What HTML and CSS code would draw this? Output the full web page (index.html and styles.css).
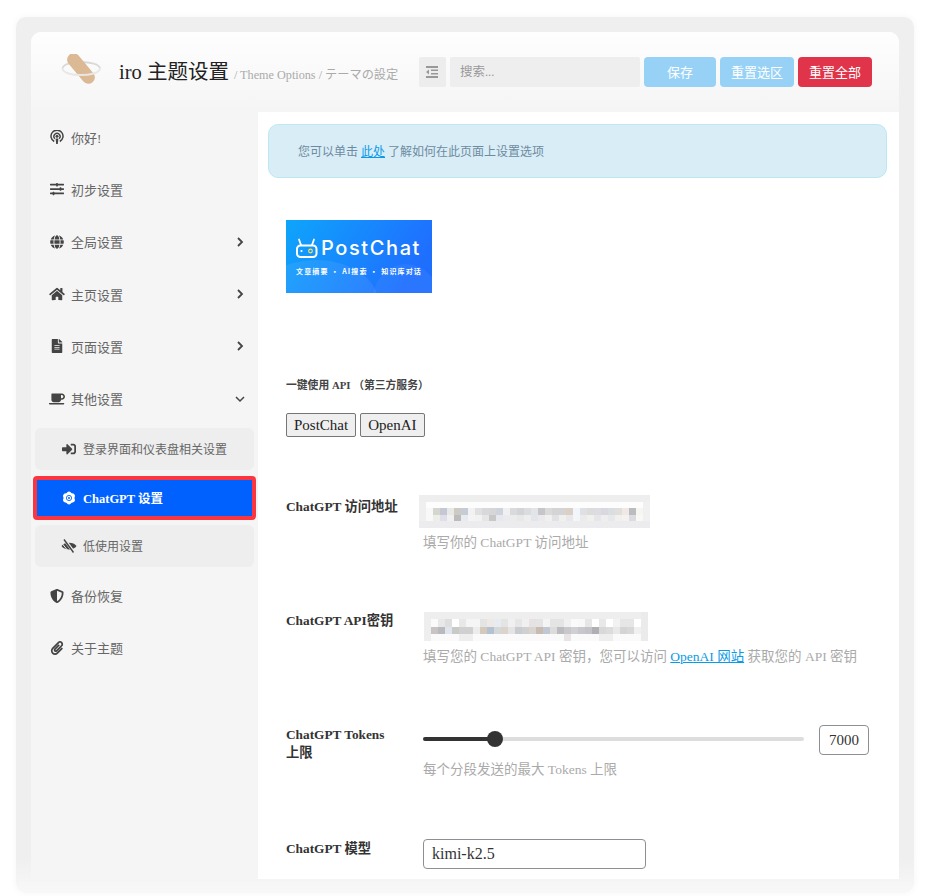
FILE: index.html
```html
<!DOCTYPE html>
<html lang="zh">
<head>
<meta charset="utf-8">
<title>iro 主题设置</title>
<link rel="stylesheet" href="styles.css">
</head>
<body>
<div class="shell">
  <div class="panel">
    <header class="top">
      <svg class="logo" width="58" height="36" viewBox="0 0 58 36">
        <path d="M1.500 14.500C2 10 11 8 20 8s18.500 2 19 6.500" fill="none" stroke="#d9d9d6" stroke-width="1.800"/>
        <rect x="13.500" y="-3.500" width="13" height="36" rx="6.500" fill="#dcb995" transform="rotate(-40 20 14.500)"/>
        <path d="M1.500 14.500C2 19 11 21 20 21s18.500-2 19-6.500" fill="none" stroke="#e8e7e3" stroke-width="2"/>
      </svg>
      <h1 class="title">iro 主题设置</h1>
      <span class="subtitle">/ Theme Options / テーマの設定</span>
      <button class="collapse" aria-label="collapse">
        <svg width="12" height="12" viewBox="0 0 12 12"><path fill="#999" d="M0 0h12v2H0zM5 3.400h7v1.600H5zM5 7h7v1.600H5zM0 10h12v2H0zM3 3.500v5L0 6z"/></svg>
      </button>
      <div class="search">搜索...</div>
      <button class="btn btn-save">保存</button>
      <button class="btn btn-section">重置选区</button>
      <button class="btn btn-all">重置全部</button>
    </header>
    <div class="body">
      <nav class="side">
        <a class="item">
          <svg class="ico" viewBox="0 0 14 14"><g fill="none" stroke="#444"><path stroke-width="1.500" d="M4.200 11.500a6 6 0 1 1 5.600 0"/><path stroke-width="1.300" d="M4.800 8.700a3.100 3.100 0 1 1 4.400 0"/></g><circle cx="7" cy="6.200" r="1.500" fill="#444"/><path fill="#444" d="M5.600 8.400h2.800L7.800 14H6.200z"/></svg>
          <span>你好!</span>
        </a>
        <a class="item">
          <svg class="ico" viewBox="0 0 512 512"><path fill="#444" d="M496 384H160v-16c0-8.800-7.200-16-16-16h-32c-8.800 0-16 7.200-16 16v16H16c-8.800 0-16 7.200-16 16v32c0 8.800 7.200 16 16 16h80v16c0 8.800 7.200 16 16 16h32c8.800 0 16-7.200 16-16v-16h336c8.800 0 16-7.200 16-16v-32c0-8.800-7.200-16-16-16zm0-160h-80v-16c0-8.800-7.200-16-16-16h-32c-8.800 0-16 7.200-16 16v16H16c-8.800 0-16 7.200-16 16v32c0 8.800 7.200 16 16 16h336v16c0 8.800 7.200 16 16 16h32c8.800 0 16-7.200 16-16v-16h80c8.800 0 16-7.200 16-16v-32c0-8.800-7.200-16-16-16zm0-160H288V48c0-8.800-7.200-16-16-16h-32c-8.800 0-16 7.200-16 16v16H16C7.200 64 0 71.200 0 80v32c0 8.800 7.200 16 16 16h208v16c0 8.800 7.200 16 16 16h32c8.800 0 16-7.200 16-16v-16h208c8.800 0 16-7.200 16-16V80c0-8.800-7.200-16-16-16z"/></svg>
          <span>初步设置</span>
        </a>
        <a class="item">
          <svg class="ico" viewBox="0 0 496 512"><path fill="#444" d="M336.500 160C322 70.700 287.800 8 248 8s-74 62.700-88.500 152h177zM152 256c0 22.200 1.200 43.500 3.300 64h185.300c2.100-20.500 3.300-41.800 3.300-64s-1.200-43.500-3.300-64H155.300c-2.100 20.500-3.300 41.800-3.300 64zm324.700-96c-28.600-67.900-86.500-120.400-158-141.600 24.400 33.800 41.200 84.700 50 141.600h108zM177.200 18.400C105.800 39.600 47.800 92.100 19.300 160h108c8.700-56.900 25.500-107.800 49.900-141.600zM487.400 192H372.700c2.100 21 3.300 42.500 3.300 64s-1.200 43-3.300 64h114.600c5.500-20.500 8.600-41.800 8.600-64s-3.100-43.500-8.500-64zM120 256c0-21.500 1.200-43 3.300-64H8.600C3.200 212.500 0 233.800 0 256s3.200 43.500 8.600 64h114.600c-2-21-3.200-42.500-3.200-64zm39.500 96c14.500 89.300 48.700 152 88.500 152s74-62.700 88.500-152h-177zm159.300 141.600c71.400-21.200 129.400-73.700 158-141.600h-108c-8.800 56.900-25.600 107.800-50 141.600zM19.300 352c28.600 67.900 86.500 120.400 158 141.600-24.400-33.800-41.200-84.700-50-141.600h-108z"/></svg>
          <span>全局设置</span>
          <svg class="chev" viewBox="0 0 8 10"><path d="M2 1l4 4-4 4" fill="none" stroke="#444" stroke-width="1.800"/></svg>
        </a>
        <a class="item">
          <svg class="ico wide" viewBox="0 0 576 512"><path fill="#444" d="M280.370 148.260L96 300.110V464a16 16 0 0 0 16 16l112.060-.29a16 16 0 0 0 15.920-16V368a16 16 0 0 1 16-16h64a16 16 0 0 1 16 16v95.640a16 16 0 0 0 16 16.050L464 480a16 16 0 0 0 16-16V300L295.670 148.260a12.190 12.190 0 0 0-15.300 0zM571.600 251.470L488 182.560V44.050a12 12 0 0 0-12-12h-56a12 12 0 0 0-12 12v72.610L318.470 43a48 48 0 0 0-61 0L4.340 251.470a12 12 0 0 0-1.600 16.900l25.500 31A12 12 0 0 0 45.150 301l235.220-193.740a12.190 12.190 0 0 1 15.300 0L530.900 301a12 12 0 0 0 16.900-1.600l25.500-31a12 12 0 0 0-1.700-16.930z"/></svg>
          <span>主页设置</span>
          <svg class="chev" viewBox="0 0 8 10"><path d="M2 1l4 4-4 4" fill="none" stroke="#444" stroke-width="1.800"/></svg>
        </a>
        <a class="item">
          <svg class="ico" viewBox="0 0 384 512"><path fill="#444" d="M224 136V0H24C10.700 0 0 10.700 0 24v464c0 13.300 10.700 24 24 24h336c13.300 0 24-10.700 24-24V160H248c-13.200 0-24-10.800-24-24zm64 236c0 6.600-5.400 12-12 12H108c-6.600 0-12-5.400-12-12v-8c0-6.600 5.400-12 12-12h168c6.600 0 12 5.400 12 12v8zm0-64c0 6.600-5.400 12-12 12H108c-6.600 0-12-5.400-12-12v-8c0-6.600 5.400-12 12-12h168c6.600 0 12 5.400 12 12v8zm0-72v8c0 6.600-5.400 12-12 12H108c-6.600 0-12-5.400-12-12v-8c0-6.600 5.400-12 12-12h168c6.600 0 12 5.400 12 12zm96-114.100v6.100H256V0h6.100c6.400 0 12.500 2.500 17 7l97.900 98c4.500 4.500 7 10.600 7 16.900z"/></svg>
          <span>页面设置</span>
          <svg class="chev" viewBox="0 0 8 10"><path d="M2 1l4 4-4 4" fill="none" stroke="#444" stroke-width="1.800"/></svg>
        </a>
        <a class="item">
          <svg class="ico wide" viewBox="0 0 640 512"><path fill="#444" d="M192 384h192c53 0 96-43 96-96h32c70.600 0 128-57.400 128-128S582.600 32 512 32H120c-13.300 0-24 10.700-24 24v232c0 53 43 96 96 96zM512 96c35.300 0 64 28.700 64 64s-28.700 64-64 64h-32V96h32zm47.700 384H48.300c-47.600 0-61-64-36-64h583.300c25 0 11.800 64-35.900 64z"/></svg>
          <span>其他设置</span>
          <svg class="chev" viewBox="0 0 10 8"><path d="M1 2l4 4 4-4" fill="none" stroke="#444" stroke-width="1.500"/></svg>
        </a>
        <div class="subs">
          <a class="sub">
            <svg class="ico" viewBox="0 0 512 512"><path fill="#444" d="M416 448h-84c-6.600 0-12-5.400-12-12v-40c0-6.600 5.400-12 12-12h84c17.700 0 32-14.300 32-32V160c0-17.700-14.300-32-32-32h-84c-6.600 0-12-5.400-12-12V76c0-6.600 5.400-12 12-12h84c53 0 96 43 96 96v192c0 53-43 96-96 96zm-47-201L201 79c-15-15-41-4.500-41 17v96H24c-13.300 0-24 10.700-24 24v96c0 13.300 10.700 24 24 24h136v96c0 21.500 26 32 41 17l168-168c9.300-9.400 9.300-24.600 0-34z"/></svg>
            <span>登录界面和仪表盘相关设置</span>
          </a>
          <a class="sub active">
            <svg class="ico" viewBox="0 0 14 14"><g fill="#fff"><ellipse cx="7" cy="7" rx="3.800" ry="6.500"/><ellipse cx="7" cy="7" rx="3.800" ry="6.500" transform="rotate(60 7 7)"/><ellipse cx="7" cy="7" rx="3.800" ry="6.500" transform="rotate(120 7 7)"/></g><circle cx="7" cy="7" r="2.600" fill="none" stroke="#0061ff" stroke-width=".9"/><circle cx="7" cy="7" r="1" fill="#0061ff"/></svg>
            <span>ChatGPT 设置</span>
          </a>
          <a class="sub">
            <svg class="ico wide" viewBox="0 0 16 14"><path fill="#444" d="M.5 7C3 2.500 13 2.500 15.500 7 13 11.500 3 11.500 .5 7z"/><path fill="none" stroke="#eee" stroke-width="3" d="M3.500 .5l9.500 13"/><path fill="none" stroke="#eee" stroke-width="1" d="M1.500 5l6.500 8"/><path fill="none" stroke="#444" stroke-width="1.400" d="M3 .5l9.500 13"/></svg>
            <span>低使用设置</span>
          </a>
        </div>
        <a class="item after">
          <svg class="ico" viewBox="0 0 512 512"><path fill="#444" d="M466.500 83.700l-192-80a48.150 48.150 0 0 0-36.900 0l-192 80C27.700 91.100 16 108.600 16 128c0 198.500 114.500 335.700 221.500 380.300 11.800 4.900 25.100 4.900 36.900 0C360.100 472.600 496 349.300 496 128c0-19.400-11.700-36.900-29.500-44.300zM256.100 446.300l-.1-381 175.900 73.300c-3.300 151.400-82.100 261.100-175.800 307.700z"/></svg>
          <span>备份恢复</span>
        </a>
        <a class="item">
          <svg class="ico" viewBox="0 0 448 512"><path fill="#444" d="M43.246 466.142c-58.430-60.289-57.341-157.511 1.386-217.581L254.392 34c44.316-45.332 116.351-45.336 160.671 0 43.890 44.894 43.943 117.329 0 162.276L232.214 383.128c-29.855 30.537-78.633 30.111-107.982-.998-28.275-29.970-27.368-77.473 1.452-106.953l143.743-146.835c6.182-6.314 16.312-6.422 22.626-.241l22.861 22.379c6.315 6.182 6.422 16.312.241 22.626L171.427 319.927c-4.932 5.045-5.236 13.428-.648 18.292 4.372 4.634 11.245 4.711 15.688.165l182.849-186.851c19.613-20.062 19.613-52.725-.011-72.798-19.189-19.627-49.957-19.637-69.154 0L90.390 293.295c-34.763 35.560-35.299 93.120-1.191 128.313 34.010 35.093 88.985 35.137 123.058.286l172.060-175.999c6.177-6.319 16.307-6.433 22.626-.256l22.877 22.364c6.319 6.177 6.434 16.307.256 22.626l-172.060 175.998c-59.576 60.938-155.943 60.216-214.770-.485z"/></svg>
          <span>关于主题</span>
        </a>
      </nav>
      <main class="content">
        <div class="alert">您可以单击 <a class="link">此处</a> 了解如何在此页面上设置选项</div>
        <svg class="banner" width="146" height="73" viewBox="0 0 146 73">
          <defs>
            <linearGradient id="bg" x1="0" y1="0" x2="1" y2="0.300">
              <stop offset="0" stop-color="#0ea5fb"/>
              <stop offset="1" stop-color="#1f6fff"/>
            </linearGradient>
          </defs>
          <rect width="146" height="73" fill="url(#bg)"/>
          <ellipse cx="30" cy="82" rx="62" ry="42" fill="#fff" opacity=".07"/>
          <ellipse cx="120" cy="82" rx="34" ry="38" fill="#fff" opacity=".05"/>
          <rect x="11" y="25.500" width="19.500" height="11.500" rx="3.500" fill="none" stroke="#fff" stroke-width="2"/>
          <path d="M15 25l-2-5.500M26 25l2-5.500" stroke="#fff" stroke-width="1.800" stroke-linecap="round"/>
          <circle cx="15.500" cy="31" r="1.100" fill="#fff"/>
          <circle cx="24.500" cy="31" r="1.800" fill="none" stroke="#ffe14d" stroke-width="1.200"/>
          <text x="35" y="35" class="pc">PostChat</text>
          <text x="10" y="53.500" class="pc-sub">文章摘要 · AI搜索 · 知识库对话</text>
        </svg>
        <div class="api-title">一键使用 API （第三方服务）</div>
        <div class="api-btns">
          <button class="plain">PostChat</button>
          <button class="plain">OpenAI</button>
        </div>
        <section class="row row-url">
          <div class="lab">ChatGPT 访问地址</div>
          <div class="fld">
            <svg class="mosaic m1" width="231" height="33" viewBox="0 0 33 5" preserveAspectRatio="none" shape-rendering="crispEdges">
              <rect width="33" height="5" fill="#f8f8f8"/>
              <rect width="33" height="1" fill="#eeeeef"/>
              <rect y="1" width="1" height="3" fill="#efeff0"/>
              <rect x="1" y="1" width="31" height="1" fill="#fdfdfd"/>
              <rect x="32" y="1" width="1" height="3" fill="#f0f0f1"/>
              <rect y="4" width="33" height="1" fill="#ececee"/>
              <rect class="c" x="2" y="2" fill="#d5d6d0"/><rect class="c" x="3" y="2" fill="#c5c8d2"/><rect class="c" x="4" y="2" fill="#e8e8e6"/><rect class="c" x="5" y="2" fill="#cfc9c4"/><rect class="c" x="6" y="2" fill="#c6ccd6"/><rect class="c" x="7" y="2" fill="#f2f2f2"/><rect class="c" x="8" y="2" fill="#e0e0e2"/><rect class="c" x="9" y="2" fill="#d8d8da"/><rect class="c" x="10" y="2" fill="#d6d6d8"/><rect class="c" x="11" y="2" fill="#cfd4dc"/><rect class="c" x="12" y="2" fill="#f0f0f2"/><rect class="c" x="13" y="2" fill="#d8dadc"/><rect class="c" x="14" y="2" fill="#d4d4d8"/><rect class="c" x="15" y="2" fill="#dadcde"/><rect class="c" x="16" y="2" fill="#e2e4e6"/><rect class="c" x="17" y="2" fill="#c6c6ca"/><rect class="c" x="18" y="2" fill="#dadada"/><rect class="c" x="19" y="2" fill="#d4d4d4"/><rect class="c" x="20" y="2" fill="#d6d4d2"/><rect class="c" x="21" y="2" fill="#dccfc6"/><rect class="c" x="22" y="2" fill="#f0f6fc"/><rect class="c" x="23" y="2" fill="#e0e0e4"/><rect class="c" x="24" y="2" fill="#dcdcdc"/><rect class="c" x="25" y="2" fill="#dcdce2"/><rect class="c" x="26" y="2" fill="#d8d8e0"/><rect class="c" x="27" y="2" fill="#dadee0"/><rect class="c" x="28" y="2" fill="#e2dedc"/><rect class="c" x="29" y="2" fill="#f0e8e4"/><rect class="c" x="30" y="2" fill="#bbbcbf"/><rect class="c" x="31" y="2" fill="#f7f5f0"/>
              <rect class="c" x="2" y="3" fill="#eceee8"/><rect class="c" x="3" y="3" fill="#dedfe8"/><rect class="c" x="4" y="3" fill="#f0f0f0"/><rect class="c" x="5" y="3" fill="#bcbcbc"/><rect class="c" x="6" y="3" fill="#e8ecf0"/><rect class="c" x="7" y="3" fill="#f4f4f4"/><rect class="c" x="8" y="3" fill="#f2f2f2"/><rect class="c" x="9" y="3" fill="#e6e6e6"/><rect class="c" x="10" y="3" fill="#c8c8c8"/><rect class="c" x="11" y="3" fill="#e6e8ee"/><rect class="c" x="12" y="3" fill="#ebebef"/><rect class="c" x="13" y="3" fill="#ececec"/><rect class="c" x="14" y="3" fill="#e6e8ea"/><rect class="c" x="15" y="3" fill="#eeeeee"/><rect class="c" x="16" y="3" fill="#e2e6ea"/><rect class="c" x="17" y="3" fill="#eaeaec"/><rect class="c" x="18" y="3" fill="#f0f0f0"/><rect class="c" x="19" y="3" fill="#e2e2e6"/><rect class="c" x="20" y="3" fill="#f0f0ee"/><rect class="c" x="21" y="3" fill="#e8e8ea"/><rect class="c" x="22" y="3" fill="#f2f6fa"/><rect class="c" x="23" y="3" fill="#ebebeb"/><rect class="c" x="24" y="3" fill="#f0f0ec"/><rect class="c" x="25" y="3" fill="#e6e6ea"/><rect class="c" x="26" y="3" fill="#eeeeee"/><rect class="c" x="27" y="3" fill="#e6e8ea"/><rect class="c" x="28" y="3" fill="#f0f0ee"/><rect class="c" x="29" y="3" fill="#f4f2f0"/><rect class="c" x="30" y="3" fill="#dcdce0"/><rect class="c" x="31" y="3" fill="#faf8f5"/>
            </svg>
            <p class="hint hint-url">填写你的 ChatGPT 访问地址</p>
          </div>
        </section>
        <section class="row row-key">
          <div class="lab">ChatGPT API密钥</div>
          <div class="fld">
            <svg class="mosaic m2" width="224" height="29" viewBox="0 0 32 4" preserveAspectRatio="none" shape-rendering="crispEdges">
              <rect width="32" height="4" fill="#fafafa"/>
              <rect width="32" height="1" fill="#eeeeee"/>
              <rect y="0" width="1" height="4" fill="#eeeeef"/>
              <rect x="31" y="0" width="1" height="4" fill="#ebebec"/>
              <rect class="c" x="2" y="1" fill="#e8e8e8"/><rect class="c" x="3" y="1" fill="#dedede"/><rect class="c" x="4" y="1" fill="#ffffff"/><rect class="c" x="5" y="1" fill="#e8e8e8"/><rect class="c" x="6" y="1" fill="#f5f5f5"/><rect class="c" x="7" y="1" fill="#f5f5f5"/><rect class="c" x="8" y="1" fill="#e4e4e4"/><rect class="c" x="9" y="1" fill="#ede9e4"/><rect class="c" x="10" y="1" fill="#e8ecf2"/><rect class="c" x="11" y="1" fill="#e4e4e4"/><rect class="c" x="12" y="1" fill="#f0f0f0"/><rect class="c" x="13" y="1" fill="#e6e6e6"/><rect class="c" x="14" y="1" fill="#f0f0f0"/><rect class="c" x="15" y="1" fill="#e6e2e2"/><rect class="c" x="16" y="1" fill="#e4e4e4"/><rect class="c" x="17" y="1" fill="#f4f4f4"/><rect class="c" x="18" y="1" fill="#e4e4e4"/><rect class="c" x="19" y="1" fill="#e4e4e4"/><rect class="c" x="20" y="1" fill="#f0f0f0"/><rect class="c" x="21" y="1" fill="#fafafa"/><rect class="c" x="22" y="1" fill="#f8f8f6"/><rect class="c" x="23" y="1" fill="#e6e6e6"/><rect class="c" x="24" y="1" fill="#ffffff"/><rect class="c" x="25" y="1" fill="#e8e8e8"/><rect class="c" x="26" y="1" fill="#ffffff"/><rect class="c" x="27" y="1" fill="#f2f2f2"/><rect class="c" x="28" y="1" fill="#e6e6e6"/><rect class="c" x="29" y="1" fill="#e6e6e6"/><rect class="c" x="30" y="1" fill="#ffffff"/>
              <rect class="c" x="1" y="2" fill="#c8c4c4"/><rect class="c" x="2" y="2" fill="#b8babe"/><rect class="c" x="3" y="2" fill="#e0e4ec"/><rect class="c" x="4" y="2" fill="#c8cac8"/><rect class="c" x="5" y="2" fill="#d0d0d0"/><rect class="c" x="6" y="2" fill="#d0d0d0"/><rect class="c" x="7" y="2" fill="#ececec"/><rect class="c" x="8" y="2" fill="#d4cabc"/><rect class="c" x="9" y="2" fill="#b4c0d4"/><rect class="c" x="10" y="2" fill="#d4d8d8"/><rect class="c" x="11" y="2" fill="#dcd4cc"/><rect class="c" x="12" y="2" fill="#e4e4e4"/><rect class="c" x="13" y="2" fill="#c8ccd0"/><rect class="c" x="14" y="2" fill="#d0d0d0"/><rect class="c" x="15" y="2" fill="#d8d4d0"/><rect class="c" x="16" y="2" fill="#c8bcb0"/><rect class="c" x="17" y="2" fill="#c0c8d4"/><rect class="c" x="18" y="2" fill="#dcdcdc"/><rect class="c" x="19" y="2" fill="#bcbcc0"/><rect class="c" x="20" y="2" fill="#c8c8cc"/><rect class="c" x="21" y="2" fill="#d0d0d4"/><rect class="c" x="22" y="2" fill="#c8c8cc"/><rect class="c" x="23" y="2" fill="#c4c4c8"/><rect class="c" x="24" y="2" fill="#b0b0b4"/><rect class="c" x="25" y="2" fill="#d8d8d8"/><rect class="c" x="26" y="2" fill="#dcdcdc"/><rect class="c" x="27" y="2" fill="#e8e8e8"/><rect class="c" x="28" y="2" fill="#d4d4d4"/><rect class="c" x="29" y="2" fill="#d8d8d8"/><rect class="c" x="30" y="2" fill="#f0f0f0"/>
              <rect class="c" x="5" y="3" fill="#eeeeee"/><rect class="c" x="6" y="3" fill="#eeeeee"/><rect class="c" x="20" y="3" fill="#e8e4e6"/><rect class="c" x="25" y="3" fill="#eeeeee"/><rect class="c" x="26" y="3" fill="#eeeeee"/>
            </svg>
            <p class="hint hint-key">填写您的 ChatGPT API 密钥，您可以访问 <a class="link">OpenAI 网站</a> 获取您的 API 密钥</p>
          </div>
        </section>
        <section class="row row-tok">
          <div class="lab">ChatGPT Tokens<br>上限</div>
          <div class="fld">
            <div class="slider-row">
              <div class="track"><div class="fill" style="width:19%"></div><div class="knob"></div></div>
              <div class="num">7000</div>
            </div>
            <p class="hint hint-tok">每个分段发送的最大 Tokens 上限</p>
          </div>
        </section>
        <section class="row row-model">
          <div class="lab">ChatGPT 模型</div>
          <div class="fld"><div class="text-input">kimi-k2.5</div></div>
        </section>
      </main>
    </div>
  </div>
</div>
</body>
</html>
```
FILE: styles.css
```css
* { box-sizing: border-box; }
html, body { margin: 0; height: 896px; overflow: hidden; background: #fff; }
body { font-family: "Liberation Serif", "Noto Sans CJK SC", serif; color: #444; }
.shell {
  margin: 17px 17px 0 16px;
  padding: 15px 15px 0;
  height: 876px;
  background: linear-gradient(#efefef 96%, #f8f8f8);
  border-radius: 10px;
  box-shadow: 0 0 6px 1px rgba(0,0,0,.03);
}
.panel {
  height: 847px;
  border-radius: 10px 10px 0 0;
  overflow: hidden;
  background: #fff;
  display: flex;
  flex-direction: column;
}
.top {
  height: 80px;
  flex: none;
  display: flex;
  align-items: center;
  padding-left: 30px;
  background: linear-gradient(#fefefe, #f5f5f5);
}
.logo { flex: none; }
.title { margin: 0; font-size: 20.500px; font-weight: 400; color: #222; line-height: 1; white-space: nowrap; }
.subtitle { font-size: 12.200px; color: #aaa; margin: 4px 0 0 5px; white-space: nowrap; width: 185px; flex: none; }
.collapse {
  width: 27px; height: 30px; flex: none; margin-right: 4px;
  border: 0; border-radius: 2px; background: #ededed;
  display: flex; align-items: center; justify-content: center; padding: 0;
}
.search {
  width: 190px; height: 30px; flex: none; margin-right: 4px;
  background: #eee; border-radius: 2px; padding-left: 10px;
  font-size: 12.500px; line-height: 30px; color: #999;
}
.btn {
  height: 30px; flex: none; margin-right: 4px; border: 0; border-radius: 4px;
  font-family: inherit; font-size: 13px; color: #fff; padding: 0 0 2px;
}
.btn-save { width: 72px; background: #97d2f6; }
.btn-section { width: 74px; background: #97d2f6; }
.btn-all { width: 74px; background: #e0344a; }
.body { flex: 1; display: flex; min-height: 0; }
.side { width: 227px; flex: none; background: #f5f5f5; }
.item {
  height: 52.300px; display: flex; align-items: center; padding: 0 14px 2px 19px;
  font-size: 13px; color: #666;
}
.item span { flex: 1; margin-left: 7px; }
.ico { width: 14px; height: 14px; flex: none; }
.ico.wide { width: 16px; margin-left: -1px; margin-right: -1px; }
.chev { width: 8px; height: 10px; flex: none; }
.item:nth-child(6) .chev { width: 10px; height: 8px; margin-right: -1px; }
.subs { display: flex; flex-direction: column; margin-top: 2px; padding-left: 4px; }
.sub {
  width: 219px; height: 42px; margin-bottom: 4px; border-radius: 6px;
  background: #eee; display: flex; align-items: center; padding-left: 27px;
  font-size: 12px; color: #666;
}
.sub:first-child { margin-bottom: 6px; }
.sub span { margin-left: 7px; }
.sub.active {
  width: 223px; height: 44px; margin: 0 0 5px -2px;
  background: #0061ff; border: 4px solid #fb3640; border-radius: 4px; color: #fff;
  font-size: 12.500px; font-weight: 700; padding-left: 25px;
}
.after { height: 52px; margin-top: 0; }
.content { flex: 1; min-width: 0; padding: 12px 12px 0 10px; background: #fff; overflow: hidden; }
.alert {
  height: 54px; background: #d9edf7; border: 1px solid #bce8f1; border-radius: 10px;
  padding-left: 29px; font-size: 12px; line-height: 54px; color: #6d8ba0;
}
.link { color: #0a9be8; text-decoration: underline; }
.banner { display: block; margin: 42px 0 0 18px; }
.pc { font-family: Inter, "Noto Sans", sans-serif; font-size: 20px; font-weight: 500; fill: #fff; letter-spacing: 1.600px; }
.pc-sub { font-family: "Noto Sans CJK SC", sans-serif; font-size: 7px; letter-spacing: 1.150px; font-weight: 700; fill: #fff; }
.api-title { margin: 85px 0 0 18px; font-size: 10.800px; font-weight: 700; color: #444; line-height: 14px; }
.api-btns { margin: 21px 0 0 18px; display: flex; gap: 4px; }
.plain {
  height: 24px; padding: 0 7px; background: #efefef; border: 1px solid #767676; border-radius: 2px;
  font-family: inherit; font-size: 15px; color: #222;
}
.row { display: flex; margin-left: 18px; }
.lab { width: 137px; flex: none; font-size: 13.300px; font-weight: 700; color: #333; line-height: 18px; padding-right: 20px; }
.fld { flex: 1; min-width: 0; }
.mosaic { display: block; filter: blur(.7px); }
.mosaic .c { width: 1px; height: 1px; }
.hint { margin: 0; font-size: 13.500px; color: #aaa; line-height: 18px; white-space: nowrap; }
.row-url { margin-top: 58px; }
.row-url .lab { padding-top: 3px; }
.m1 { margin-left: -4px; }
.hint-url { margin-top: 6px; }
.row-key { margin-top: 60px; }
.m2 { margin-left: 1px; }
.hint-key { margin-top: 7px; }
.row-tok { margin-top: 59px; }
.row-tok .lab { padding-top: 1px; }
.slider-row { display: flex; align-items: center; gap: 15px; height: 30px; width: 446px; }
.track { flex: 1; height: 4px; background: #ddd; position: relative; border-radius: 2px; margin-top: -2px; }
.fill { height: 4px; background: #333; border-radius: 2px; }
.knob { position: absolute; left: 64px; top: -6px; width: 16px; height: 16px; border-radius: 50%; background: #333; }
.num {
  width: 50px; height: 30px; border: 1px solid #8c8f94; border-radius: 4px;
  font-size: 15px; color: #333; line-height: 28px; text-align: center;
}
.hint-tok { margin-top: 6px; }
.row-model { margin-top: 60px; }
.row-model .lab { padding-top: 1px; }
.text-input {
  width: 223px; height: 30px; border: 1px solid #8c8f94; border-radius: 4px;
  font-size: 16px; line-height: 28px; color: #333; padding-left: 8px;
}
```
